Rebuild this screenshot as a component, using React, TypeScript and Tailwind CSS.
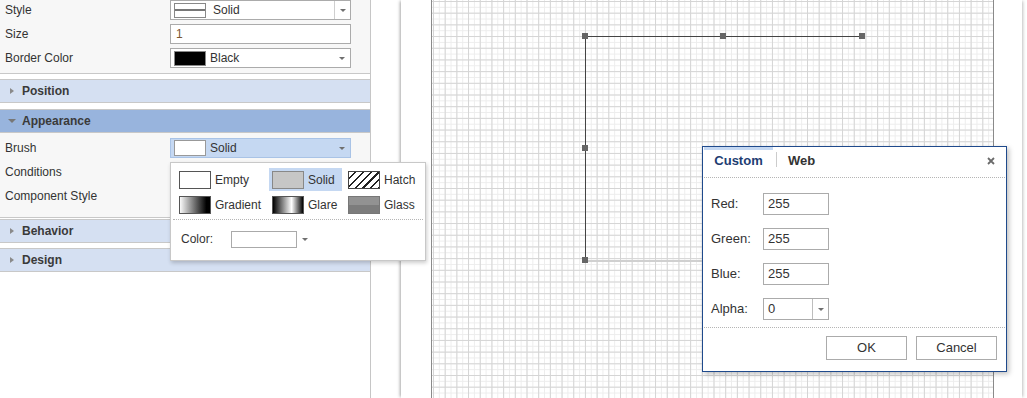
import React from "react";

const Arrow = () => (
  <span className="h-0 w-0 border-x-[3px] border-t-[3px] border-x-transparent border-t-[#6f6f6f]" />
);

function Row({ label, children }: { label: string; children?: React.ReactNode }) {
  return (
    <div className="grid h-5 grid-cols-[170px_181px] items-center">
      <span className="pl-[5px]">{label}</span>
      {children}
    </div>
  );
}

function Header({ title, open = false }: { title: string; open?: boolean }) {
  return (
    <div
      className={`flex h-[24px] items-center border-y border-[#c8c8c8] font-bold text-[#3a3a3a] ${
        open ? "bg-[#98b4dd]" : "bg-[#d5e0f2]"
      }`}
    >
      <span className="flex w-[22px] justify-center pl-[1px]">
        {open ? (
          <span className="h-0 w-0 border-x-[4px] border-t-[4px] border-x-transparent border-t-[#777]" />
        ) : (
          <span className="h-0 w-0 border-y-[3.5px] border-l-[4px] border-y-transparent border-l-[#8a8a8a]" />
        )}
      </span>
      {title}
    </div>
  );
}

function BrushItem({
  label,
  swatch,
  width,
  selected = false,
}: {
  label: string;
  swatch: string;
  width: string;
  selected?: boolean;
}) {
  return (
    <div className={`flex h-[23px] items-center gap-[4px] px-[3px] ${width} ${selected ? "bg-[#c5d8f2]" : ""}`}>
      <span className={`h-[18px] w-[32px] shrink-0 border ${swatch}`} />
      <span>{label}</span>
    </div>
  );
}

function Field({ label, value, select = false }: { label: string; value: string; select?: boolean }) {
  return (
    <div className="flex h-[22px] items-center">
      <span className="w-[60px] shrink-0 pl-[8px]">{label}</span>
      <div className="flex h-[22px] w-[66px] items-center border border-[#ababab] bg-white">
        <span className="flex-1 pl-[4px]">{value}</span>
        {select && (
          <span className="flex h-full w-[16px] items-center justify-center border-l border-[#bdbdbd]">
            <Arrow />
          </span>
        )}
      </div>
    </div>
  );
}

export default function App() {
  return (
    <div className="relative flex h-[398px] w-[1027px] overflow-hidden bg-white font-['Liberation_Sans',Arial,sans-serif] text-[12px] text-[#333]">
      {/* property panel */}
      <aside className="flex w-[371px] shrink-0 flex-col border-r border-[#c6c6c6]">
        <div className="flex flex-col gap-1 border-b border-[#c8c8c8] bg-[#f7f7f7] pb-[5px]">
          <Row label="Style">
            <div className="flex h-5 items-center border border-[#ababab] bg-white">
              <span className="ml-[3px] flex h-[15px] w-[32px] items-center border border-[#888]">
                <span className="h-[2px] w-full bg-[#777]" />
              </span>
              <span className="ml-[7px] flex-1">Solid</span>
              <span className="flex h-full w-[16px] items-center justify-center border-l border-[#cfcfcf]">
                <Arrow />
              </span>
            </div>
          </Row>
          <Row label="Size">
            <div className="flex h-5 items-center border border-[#ababab] bg-white pl-[5px] text-[#7a5530]">1</div>
          </Row>
          <Row label="Border Color">
            <div className="flex h-5 items-center border border-[#ababab] bg-white">
              <span className="ml-[3px] h-[15px] w-[32px] border border-[#888] bg-black" />
              <span className="ml-[4px] flex-1">Black</span>
              <span className="flex w-[16px] justify-center">
                <Arrow />
              </span>
            </div>
          </Row>
        </div>

        <div className="mt-[5px]">
          <Header title="Position" />
        </div>
        <div className="mt-[6px]">
          <Header title="Appearance" open />
        </div>
        <div className="flex flex-col gap-1 border-b border-[#c8c8c8] bg-[#f7f7f7] pb-[11px] pt-[5px]">
          <Row label="Brush">
            <div className="flex h-5 items-center border border-[#a9c3e6] bg-[#c5d8f2]">
              <span className="ml-[3px] h-[16px] w-[32px] border border-[#999] bg-white" />
              <span className="ml-[4px] flex-1">Solid</span>
              <span className="flex w-[16px] justify-center">
                <Arrow />
              </span>
            </div>
          </Row>
          <Row label="Conditions" />
          <Row label="Component Style" />
        </div>
        <div className="mt-[1px]">
          <Header title="Behavior" />
        </div>
        <div className="mt-[5px]">
          <Header title="Design" />
        </div>
      </aside>

      {/* page and canvas */}
      <main className="flex flex-1 pl-[30px]">
        <div className="h-full w-[621px] bg-white pl-[30px] pr-[28px] shadow-[-2px_0_3px_-1px_rgba(0,0,0,0.35),2px_0_3px_-1px_rgba(0,0,0,0.25)]">
          <div className="relative h-full w-[563px] border-x border-[#8a8a8a] bg-[linear-gradient(to_right,#d5d5d5_1px,transparent_1px),linear-gradient(to_bottom,#d5d5d5_1px,transparent_1px),linear-gradient(to_right,#ededed_1px,transparent_1px),linear-gradient(to_bottom,#ededed_1px,transparent_1px)] [background-position:1px_1px] [background-size:11.7px_11.7px,11.7px_11.7px,5.85px_5.85px,5.85px_5.85px]">
            <div className="absolute left-[153px] top-[36px] h-[225px] w-[277px] border-l border-t border-[#444]" />
            <div className="absolute left-[153px] top-[260px] h-[2px] w-[277px] bg-[#d0d0d0]" />
            <span className="absolute left-[150px] top-[33px] h-[6px] w-[6px] bg-[#666]" />
            <span className="absolute left-[288px] top-[33px] h-[6px] w-[6px] bg-[#666]" />
            <span className="absolute left-[427px] top-[33px] h-[6px] w-[6px] bg-[#666]" />
            <span className="absolute left-[150px] top-[145px] h-[6px] w-[6px] bg-[#666]" />
            <span className="absolute left-[150px] top-[257px] h-[6px] w-[6px] bg-[#666]" />
          </div>
        </div>
      </main>

      {/* brush dropdown */}
      <div className="absolute left-[170px] top-[162px] flex h-[99px] w-[256px] flex-col border border-[#c8c8c8] bg-white pt-[5px] shadow-[1px_2px_4px_rgba(0,0,0,0.2)]">
        <div className="flex gap-[3px] pl-[5px]">
          <BrushItem label="Empty" width="w-[90px]" swatch="border-[#555] bg-white" />
          <BrushItem label="Solid" width="w-[73px]" swatch="border-[#888] bg-[#c6c6c6]" selected />
          <BrushItem
            label="Hatch"
            width="w-[76px]"
            swatch="border-[#444] bg-[repeating-linear-gradient(135deg,#fff_0_4px,#222_4px_5.5px)]"
          />
        </div>
        <div className="mt-[2px] flex gap-[3px] pl-[5px]">
          <BrushItem
            label="Gradient"
            width="w-[90px]"
            swatch="border-[#555] bg-[linear-gradient(to_right,#fafafa,#000_88%)]"
          />
          <BrushItem
            label="Glare"
            width="w-[73px]"
            swatch="border-[#555] bg-[linear-gradient(to_right,#000,#fff_62%,#000)]"
          />
          <BrushItem
            label="Glass"
            width="w-[76px]"
            swatch="border-[#777] bg-[linear-gradient(to_bottom,#929292_50%,#7c7c7c_50%)]"
          />
        </div>
        <div className="mx-[2px] mt-[3px] border-t border-dotted border-[#b5b5b5]" />
        <div className="mt-[9px] flex h-5 items-center pl-[10px]">
          <span className="w-[50px]">Color:</span>
          <span className="h-[17px] w-[66px] border border-[#aaa] bg-white" />
          <span className="ml-[5px] flex">
            <Arrow />
          </span>
        </div>
      </div>

      {/* colour dialog */}
      <div className="absolute left-[702px] top-[146px] flex w-[305px] flex-col border border-[#1f4a8c] bg-white text-[13px] shadow-[2px_2px_5px_rgba(0,0,0,0.25)]">
        <div className="flex h-[30px] items-start pl-[1px]">
          <div className="flex w-[69px] flex-col">
            <span className="h-[3px] bg-[#c5d8f2]" />
            <span className="h-[22px] text-center font-bold leading-[22px] text-[#1d3d72]">Custom</span>
          </div>
          <span className="ml-[3px] mt-[5px] h-[15px] w-px bg-[#cccccc]" />
          <span className="ml-[11px] mt-[3px] font-bold leading-[22px] text-[#333]">Web</span>
          <svg className="ml-auto mr-[11px] mt-[10px]" width="8" height="8" viewBox="0 0 8 8">
            <path d="M1 1L7 7M7 1L1 7" stroke="#6b6b6b" strokeWidth="1.8" />
          </svg>
        </div>
        <div className="mx-[1px] border-t border-dotted border-[#b5b5b5]" />
        <div className="flex flex-col gap-[13px] pt-[15px]">
          <Field label="Red:" value="255" />
          <Field label="Green:" value="255" />
          <Field label="Blue:" value="255" />
          <Field label="Alpha:" value="0" select />
        </div>
        <div className="mx-[1px] mt-[7px] border-t border-dotted border-[#b5b5b5]" />
        <div className="flex justify-end gap-[9px] pb-[11px] pr-[9px] pt-[8px]">
          <button className="h-[24px] w-[81px] border border-[#ababab] bg-white">OK</button>
          <button className="h-[24px] w-[81px] border border-[#ababab] bg-white">Cancel</button>
        </div>
      </div>
    </div>
  );
}
